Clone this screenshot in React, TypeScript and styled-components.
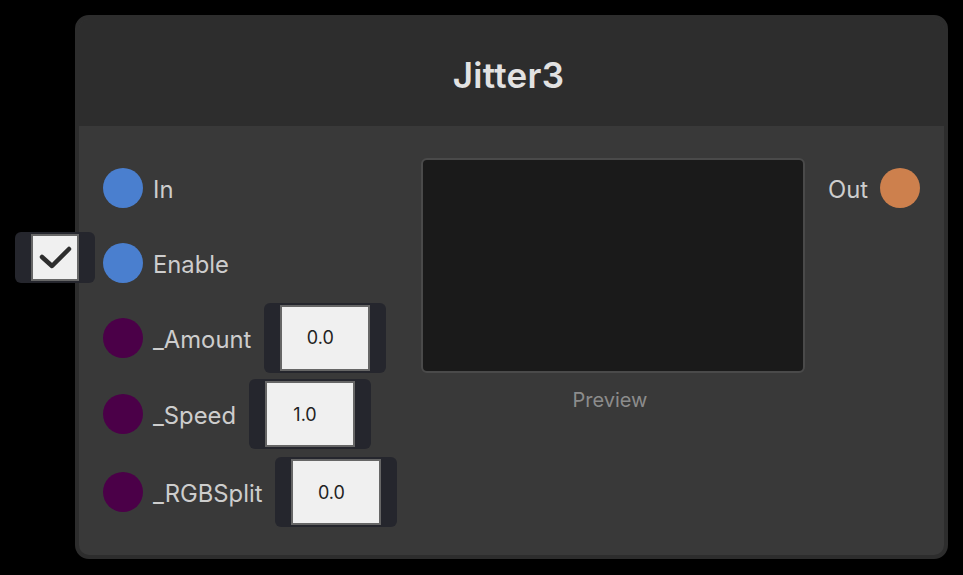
import { FC } from 'react';
import styled, { createGlobalStyle } from 'styled-components';

const GlobalStyle = createGlobalStyle`
  html, body {
    margin: 0;
    padding: 0;
    background: #000;
  }

  body {
    font-family: Inter, "Noto Sans", sans-serif;
  }
`;

type PortKind = 'texture' | 'bool' | 'float' | 'out';

const portColors: Record<PortKind, string> = {
  texture: '#4a7fcf',
  bool: '#4a7fcf',
  float: '#4b0048',
  out: '#cd804d',
};

interface IInput {
  id: string;
  label: string;
  kind: PortKind;
  value?: string;
  checkbox?: boolean;
}

const inputs: IInput[] = [
  { id: 'in', label: 'In', kind: 'texture' },
  { id: 'enable', label: 'Enable', kind: 'bool', checkbox: true },
  { id: 'amount', label: '_Amount', kind: 'float', value: '0.0' },
  { id: 'speed', label: '_Speed', kind: 'float', value: '1.0' },
  { id: 'rgb', label: '_RGBSplit', kind: 'float', value: '0.0' },
];

const App: FC = () => {
  return (
    <>
      <GlobalStyle />
      <Canvas>
        <Node>
          <Header>
            <Title>Jitter3</Title>
          </Header>
          <Body>
            <Inputs>
              {inputs.map((el) => (
                <Row key={el.id} $tall={!!el.value}>
                  {el.checkbox && (
                    <CheckWidget>
                      <CheckBox>
                        <svg width="34" height="26" viewBox="0 0 34 26">
                          <path
                            d="M4 12 L14 21 L31 4"
                            fill="none"
                            stroke="#2e2e2e"
                            strokeWidth="4.5"
                            strokeLinecap="round"
                            strokeLinejoin="round"
                          />
                        </svg>
                      </CheckBox>
                    </CheckWidget>
                  )}
                  <Port $color={portColors[el.kind]} />
                  <Label>{el.label}</Label>
                  {el.value && (
                    <Field>
                      <FieldBox>{el.value}</FieldBox>
                    </Field>
                  )}
                </Row>
              ))}
            </Inputs>
            <PreviewCol>
              <Preview />
              <Caption>Preview</Caption>
            </PreviewCol>
            <Outputs>
              <OutRow>
                <Label>Out</Label>
                <Port $color={portColors.out} />
              </OutRow>
            </Outputs>
          </Body>
        </Node>
      </Canvas>
    </>
  );
};

export default App;

const Canvas = styled.div`
  width: 963px;
  height: 575px;
  padding: 15px 0 0 75px;
  box-sizing: border-box;
`;

const Node = styled.div`
  width: 873px;
  height: 544px;
  box-sizing: border-box;
  border: 4px solid #2d2d2d;
  border-radius: 14px;
  background: #393939;
  display: flex;
  flex-direction: column;
`;

const Header = styled.div`
  height: 107px;
  background: #2d2d2d;
  border-radius: 10px 10px 0 0;
  display: flex;
  align-items: center;
  justify-content: center;
`;

const Title = styled.h1`
  margin: 0 0 0 -6px;
  padding-top: 4px;
  font-weight: 600;
  font-size: 35px;
  color: #e2e2e2;
  letter-spacing: 0.3px;
`;

const Body = styled.div`
  flex: 1;
  display: flex;
  padding: 24px;
`;

const Inputs = styled.div`
  width: 318px;
  display: flex;
  flex-direction: column;
`;

const Row = styled.div<{ $tall: boolean }>`
  position: relative;
  display: flex;
  align-items: center;
  height: ${({ $tall }) => ($tall ? '78px' : '75px')};

  &:nth-child(3) {
    height: 75px;
  }
`;

const Port = styled.span<{ $color: string }>`
  flex: none;
  width: 40px;
  height: 40px;
  border-radius: 50%;
  background: ${({ $color }) => $color};
`;

const Label = styled.span`
  margin-left: 10px;
  padding-top: 4px;
  font-size: 23.8px;
  color: #cdcdcd;
  line-height: 1;
`;

const Field = styled.div`
  margin-left: 13px;
  width: 122px;
  height: 70px;
  box-sizing: border-box;
  padding: 2px 16px;
  background: #25262d;
  border-radius: 6px;
`;

const FieldBox = styled.div`
  height: 100%;
  box-sizing: border-box;
  border: 2px solid #666;
  padding-right: 10px;
  background: #f0f0f0;
  display: flex;
  align-items: center;
  justify-content: center;
  font-size: 18px;
  color: #222;
`;

const CheckWidget = styled.div`
  position: absolute;
  left: -88px;
  top: 7px;
  width: 80px;
  height: 51px;
  box-sizing: border-box;
  padding: 2px 16px;
  background: #25262d;
  border-radius: 6px;
`;

const CheckBox = styled.div`
  height: 100%;
  box-sizing: border-box;
  border: 2px solid #666;
  background: #f0f0f0;
  display: flex;
  align-items: center;
  justify-content: center;
`;

const PreviewCol = styled.div`
  width: 384px;
  margin-top: 8px;
  display: flex;
  flex-direction: column;
  align-items: center;
`;

const Preview = styled.div`
  width: 100%;
  height: 215px;
  box-sizing: border-box;
  border: 2px solid #4a4a4a;
  border-radius: 6px;
  background: #1a1a1a;
`;

const Caption = styled.span`
  margin-top: 15px;
  margin-right: 6px;
  font-size: 20px;
  color: #8c8c8c;
`;

const Outputs = styled.div`
  flex: 1;
  display: flex;
  flex-direction: column;
  align-items: flex-end;
`;

const OutRow = styled.div`
  display: flex;
  align-items: center;
  height: 75px;
  gap: 12px;

  ${Label} {
    margin-left: 0;
  }
`;
